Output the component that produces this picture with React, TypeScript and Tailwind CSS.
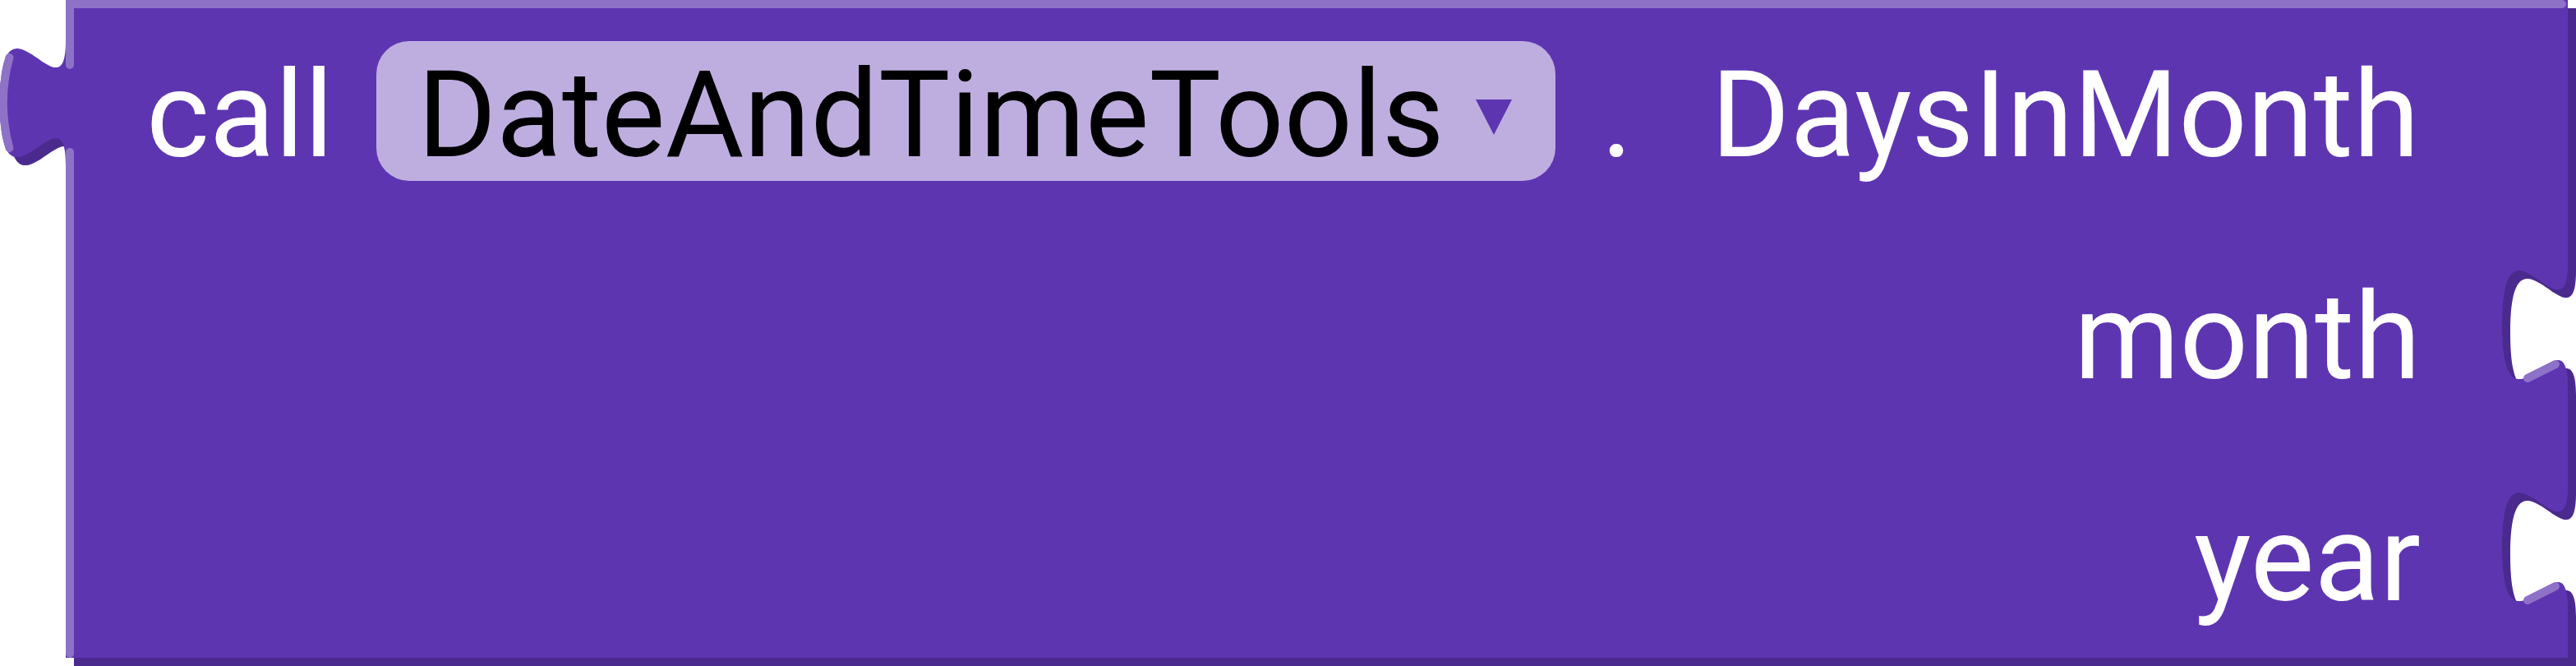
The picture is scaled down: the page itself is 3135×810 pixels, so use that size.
import React from 'react';

const BODY = '#5E35B1';
const DARK = '#4B2A8E';
const LIGHT = '#8E72C8';

// puzzle tab sticking out of the left edge (output connection)
const OutputTab = () => (
  <svg className="absolute left-0 top-0" width={80} height={220} viewBox="0 0 80 220">
    <path d="M90,60 C90,160 10,-20 10,135 S90,110 90,210 Z" fill={DARK} />
    <path d="M80,50 C80,150 0,-30 0,125 S80,100 80,200 Z" fill={BODY} />
    <path d="M11.4,180 Q-3.8,125 11.4,70" fill="none" stroke={LIGHT} strokeWidth={10} strokeLinecap="round" />
  </svg>
);

// notch cut into the right edge for a value input
const InputSocket = ({ top }: { top: string }) => (
  <svg className={`absolute left-[3035px] ${top}`} width={100} height={200} viewBox="0 0 100 200">
    <path d="M90,20 C90,120 10,-60 10,95 S90,70 90,170 Z" fill={DARK} />
    <path d="M100,30 C100,130 20,-50 20,105 S100,80 100,180 Z" fill="#ffffff" />
    <path
      d="M0,0 H90 V200 H0 Z M90,20 C90,120 10,-60 10,95 S90,70 90,170 Z"
      fill={BODY}
      fillRule="evenodd"
    />
    <path d="M41,160 L75,143" stroke={LIGHT} strokeWidth={10} strokeLinecap="round" />
  </svg>
);

const DropdownField = ({ label }: { label: string }) => (
  <div className="ml-[52px] mt-[40px] flex h-[170px] items-start rounded-[40px] bg-[#BEAEE0] pl-[50px] pr-[53px]">
    <span className="mt-[10px] leading-[160px] text-black">{label}</span>
    <svg className="ml-[38px] mt-[71px]" width={44} height={43} viewBox="0 0 44 43">
      <polygon points="0,0 44,0 22,43" fill={BODY} />
    </svg>
  </div>
);

export default function App() {
  return (
    <div className="relative h-[810px] w-[3135px] bg-white font-['Roboto',sans-serif]">
      <div className="ml-[80px] flex h-[800px] w-[3045px] flex-col bg-[#5E35B1] shadow-[10px_10px_0_0_#4B2A8E]">
        <div className="h-[10px] w-[3043px] shrink-0 rounded-r-[5px] bg-[#8E72C8]" />
        <div className="flex flex-1">
          <div className="flex w-[10px] flex-col">
            <div className="h-[74px] rounded-b-[5px] bg-[#8E72C8]" />
            <div className="mt-[96px] flex-1 rounded-[5px] bg-[#8E72C8]" />
          </div>
          <div className="flex flex-1 flex-col text-[146.67px] text-white">
            <div className="flex h-[270px] items-start whitespace-nowrap">
              <span className="ml-[88px] mt-[45px] leading-[170px]">call</span>
              <DropdownField label="DateAndTimeTools" />
              <span className="ml-[56px] mt-[45px] leading-[170px]">.</span>
              <span className="ml-[95px] mt-[45px] leading-[170px]">DaysInMonth</span>
            </div>
            <div className="flex h-[270px] items-start justify-end pr-[179px]">
              <span className="mt-[45px] leading-[170px]">month</span>
            </div>
            <div className="flex flex-1 items-start justify-end pr-[179px]">
              <span className="mt-[45px] leading-[170px]">year</span>
            </div>
          </div>
        </div>
      </div>
      <OutputTab />
      <InputSocket top="top-[300px]" />
      <InputSocket top="top-[570px]" />
    </div>
  );
}
